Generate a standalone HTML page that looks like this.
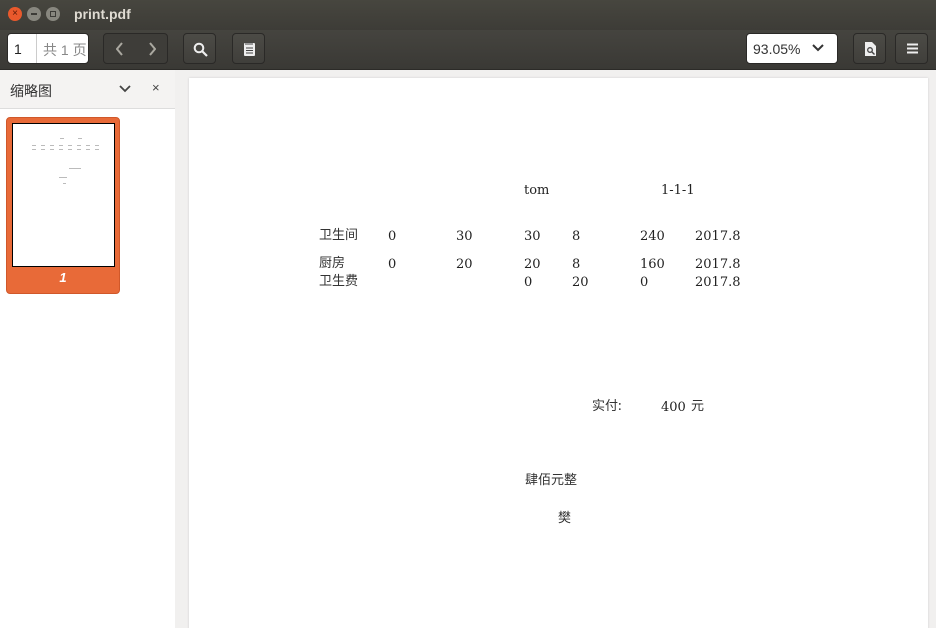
<!DOCTYPE html>
<html><head><meta charset="utf-8"><style>
*{margin:0;padding:0;box-sizing:border-box}
html,body{width:936px;height:628px;overflow:hidden}
body{font-family:"Liberation Sans","Noto Sans CJK SC",sans-serif;background:#f1f0ef;position:relative}
.a{position:absolute}
#title{left:0;top:0;width:936px;height:30px;background:linear-gradient(#47463f,#3d3c37)}
#tb{left:0;top:30px;width:936px;height:40px;background:linear-gradient(#45443f,#3a3935);border-bottom:1px solid #2c2b28}
.btn{position:absolute;border:1px solid #2a2927;border-radius:4px;background:linear-gradient(#4c4b46,#403f3b)}
.c{position:absolute;width:14px;height:14px;border-radius:50%;top:7px}
.pg{font-family:"DejaVu Serif",serif;font-size:13px;line-height:16px;color:#222;position:absolute;white-space:nowrap;margin-top:2px}
.cj{font-family:"Noto Sans CJK SC",sans-serif;font-size:13px;line-height:16px;color:#333;position:absolute;white-space:nowrap;margin-top:-1px}
.d{position:absolute;height:1px;background:#bbb}
</style></head><body>
<div id="title" class="a">
 <div class="c" style="left:8px;background:#e9592c;color:#5a1a08;font-size:10px;text-align:center;line-height:14px">×</div>
 <div class="c" style="left:27px;background:#88877f"><div style="position:absolute;left:4px;top:6px;width:6px;height:2px;background:#3c3b37"></div></div>
 <div class="c" style="left:46px;background:#88877f"><div style="position:absolute;left:4px;top:4px;width:6px;height:6px;border:1px solid #3c3b37"></div></div>
 <div class="a" style="left:74px;top:6px;color:#dfdbd2;font-size:14px;font-weight:bold">print.pdf</div>
</div>
<div id="tb" class="a">
 <div class="a" style="left:7px;top:3px;width:82px;height:31px;background:#fff;border:1px solid #2a2927;border-radius:4px">
  <div class="a" style="left:28px;top:0;width:1px;height:29px;background:#ccc"></div>
  <div class="a" style="left:6px;top:7px;font-size:14px;color:#222">1</div>
  <div class="a" style="left:35px;top:6px;font-size:14px;color:#888">共 1 页</div>
 </div>
 <div class="btn" style="left:103px;top:3px;width:65px;height:31px;background:#3e3d39">
  <svg class="a" style="left:12px;top:8px" width="40" height="14"><path d="M6 1L1 7l5 6M34 1l5 6-5 6" stroke="#aaa8a0" stroke-width="2" fill="none"/></svg>
 </div>
 <div class="btn" style="left:183px;top:3px;width:33px;height:31px">
  <svg class="a" style="left:9px;top:8px" width="15" height="15"><circle cx="6" cy="6" r="4.3" stroke="#eee" stroke-width="2" fill="none"/><path d="M9 9l5 5" stroke="#eee" stroke-width="2.2"/></svg>
 </div>
 <div class="btn" style="left:232px;top:3px;width:33px;height:31px">
  <svg class="a" style="left:10px;top:7px" width="13" height="16"><rect x="1" y="2" width="11" height="13" rx="1" fill="#eee"/><path d="M3 1v3M5 1v3M7 1v3M9 1v3M3 7h7M3 9.5h7M3 12h7" stroke="#444" stroke-width="1"/></svg>
 </div>
 <div class="a" style="left:746px;top:3px;width:92px;height:31px;background:#fff;border:1px solid #2a2927;border-radius:4px">
  <div class="a" style="left:6px;top:7px;font-size:14px;color:#333">93.05%</div>
  <svg class="a" style="left:64px;top:9px" width="14" height="10"><path d="M2 2l5 5 5-5" stroke="#333" stroke-width="2" fill="none"/></svg>
 </div>
 <div class="btn" style="left:853px;top:3px;width:33px;height:31px">
  <svg class="a" style="left:10px;top:7px" width="13" height="16"><path d="M1 1h7l4 4v10H1z" fill="#eee"/><circle cx="6" cy="9" r="2.3" stroke="#444" stroke-width="1.3" fill="none"/><path d="M7.5 10.5l3 3" stroke="#444" stroke-width="1.4"/></svg>
 </div>
 <div class="btn" style="left:895px;top:3px;width:33px;height:31px">
  <svg class="a" style="left:10px;top:9px" width="13" height="12"><path d="M1 1.5h11M1 5.5h11M1 9.5h11" stroke="#eee" stroke-width="2"/></svg>
 </div>
</div>
<div class="a" style="left:0;top:70px;width:175px;height:558px;background:#fff"></div>
<div class="a" style="left:0;top:70px;width:175px;height:39px;background:#f4f3f2;border-bottom:1px solid #ddd">
 <div class="a" style="left:10px;top:11px;font-size:14px;color:#333">缩略图</div>
 <svg class="a" style="left:119px;top:15px" width="12" height="8"><path d="M1 1l5 5 5-5" stroke="#444" stroke-width="1.8" fill="none"/></svg>
 <div class="a" style="left:152px;top:10px;font-size:13px;color:#444">×</div>
</div>
<div class="a" style="left:6px;top:117px;width:114px;height:177px;background:#e86a38;border-radius:4px;border:1px solid #d0582a">
 <div class="a" style="left:5px;top:5px;width:103px;height:144px;background:#fff;border:1px solid #000">
  <div class="d" style="left:47px;top:14px;width:4px"></div><div class="d" style="left:65px;top:14px;width:4px"></div>
  <div class="d" style="left:19px;top:21px;width:70px;background:repeating-linear-gradient(90deg,#bbb 0 4px,transparent 4px 9px)"></div>
  <div class="d" style="left:19px;top:25px;width:70px;background:repeating-linear-gradient(90deg,#bbb 0 4px,transparent 4px 9px)"></div>
  <div class="d" style="left:56px;top:44px;width:12px"></div>
  <div class="d" style="left:46px;top:53px;width:8px"></div>
  <div class="d" style="left:50px;top:59px;width:3px"></div>
 </div>
 <div class="a" style="left:0;top:152px;width:112px;text-align:center;color:#fff;font-size:13px;font-style:italic;font-weight:bold">1</div>
</div>
<div class="a" style="left:189px;top:78px;width:739px;height:560px;background:#fff;box-shadow:0 0 2px #ccc"></div>
<div class="pg" style="left:524px;top:181px">tom</div>
<div class="pg" style="left:661px;top:181px">1-1-1</div>
<div class="cj" style="left:319px;top:227px">卫生间</div>
<div class="pg" style="left:388px;top:227px">0</div><div class="pg" style="left:456px;top:227px">30</div><div class="pg" style="left:524px;top:227px">30</div><div class="pg" style="left:572px;top:227px">8</div><div class="pg" style="left:640px;top:227px">240</div><div class="pg" style="left:695px;top:227px">2017.8</div>
<div class="cj" style="left:319px;top:255px">厨房</div>
<div class="pg" style="left:388px;top:255px">0</div><div class="pg" style="left:456px;top:255px">20</div><div class="pg" style="left:524px;top:255px">20</div><div class="pg" style="left:572px;top:255px">8</div><div class="pg" style="left:640px;top:255px">160</div><div class="pg" style="left:695px;top:255px">2017.8</div>
<div class="cj" style="left:319px;top:273px">卫生费</div>
<div class="pg" style="left:524px;top:273px">0</div><div class="pg" style="left:572px;top:273px">20</div><div class="pg" style="left:640px;top:273px">0</div><div class="pg" style="left:695px;top:273px">2017.8</div>
<div class="cj" style="left:592px;top:398px">实付:</div>
<div class="pg" style="left:661px;top:398px">400</div><div class="cj" style="left:691px;top:398px">元</div>
<div class="cj" style="left:525px;top:472px">肆佰元整</div>
<div class="cj" style="left:558px;top:510px">樊</div>
</body></html>
